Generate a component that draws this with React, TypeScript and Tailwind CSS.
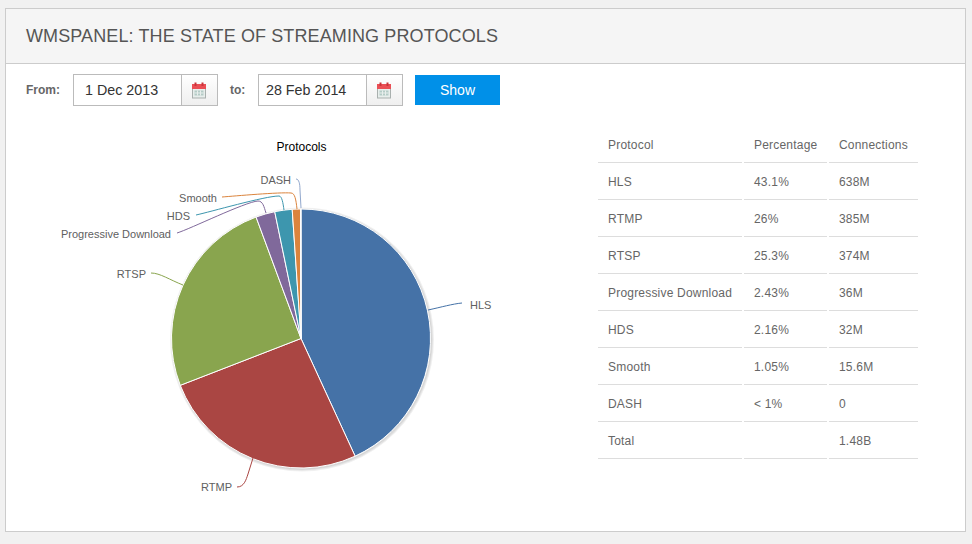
const rows = [
  ["HLS", "43.1%", "638M"],
  ["RTMP", "26%", "385M"],
  ["RTSP", "25.3%", "374M"],
  ["Progressive Download", "2.43%", "36M"],
  ["HDS", "2.16%", "32M"],
  ["Smooth", "1.05%", "15.6M"],
  ["DASH", "< 1%", "0"],
  ["Total", "", "1.48B"],
];

const cx = 301, cy = 338.5, r = 129.5;
const pt = (deg: number) => {
  const a = (deg * Math.PI) / 180;
  return [cx + r * Math.sin(a), cy - r * Math.cos(a)];
};
const slice = (from: number, to: number) => {
  const [x1, y1] = pt(from);
  const [x2, y2] = pt(to);
  return `M${cx} ${cy}L${x1} ${y1}A${r} ${r} 0 ${to - from > 180 ? 1 : 0} 1 ${x2} ${y2}Z`;
};

const slices = [
  { from: 0, to: 155.3, color: "#4572a7" },
  { from: 155.3, to: 248.8, color: "#aa4643" },
  { from: 248.8, to: 339.7, color: "#89a54e" },
  { from: 339.7, to: 348.3, color: "#80699b" },
  { from: 348.3, to: 356.1, color: "#3d96ae" },
  { from: 356.1, to: 359.8, color: "#db843d" },
  { from: 359.8, to: 360, color: "#92a8cd" },
];

const labels = [
  { text: "HLS", x: 470, y: 309, anchor: "start", color: "#4572a7", d: "M462 303C452 304 442 307 428 310" },
  { text: "RTMP", x: 232, y: 491, anchor: "end", color: "#aa4643", d: "M237 487C244 487 246 480 248 474L253 458" },
  { text: "RTSP", x: 146, y: 278, anchor: "end", color: "#89a54e", d: "M151 273C160 273 170 280 183 285" },
  { text: "Progressive Download", x: 171, y: 238, anchor: "end", color: "#80699b", d: "M177 233C190 229 245 202 258 201C263 201 264 207 266 213" },
  { text: "HDS", x: 190, y: 220, anchor: "end", color: "#3d96ae", d: "M196 215C210 212 265 196 279 196C282 196 283 203 284 210" },
  { text: "Smooth", x: 217, y: 202, anchor: "end", color: "#db843d", d: "M222 197C235 196 280 192 291 193C295 193 296 200 297 209" },
  { text: "DASH", x: 291, y: 184, anchor: "end", color: "#92a8cd", d: "M296 179C299 179 300 184 300 190L301 208" },
];

function CalendarIcon() {
  return (
    <svg width="16" height="17" viewBox="0 0 16 17">
      <rect x="1.5" y="5" width="13" height="11" fill="#e8eeec" stroke="#a9b0ae" />
      <rect x="1" y="2" width="14" height="5" fill="#ea4f55" />
      <rect x="3.5" y="0.5" width="2" height="3.5" fill="#c9343a" />
      <rect x="10.5" y="0.5" width="2" height="3.5" fill="#c9343a" />
      <rect x="3.5" y="8.5" width="9" height="5" fill="#b4cbc6" />
      <path d="M6.5 8.5v5M9.5 8.5v5M3.5 11h9" stroke="#e8eeec" strokeWidth="1" />
    </svg>
  );
}

function DateField({ value, indent }: { value: string; indent: string }) {
  return (
    <div className="flex h-8 w-[145px] border border-[#bbbbbb] bg-white">
      <div className={`flex w-[108px] items-center border-r border-[#bbbbbb] pt-px text-[14.3px] text-[#333333] ${indent}`}>{value}</div>
      <div className="flex flex-1 items-center justify-center bg-gradient-to-b from-white to-[#efefef] pr-[2px]">
        <CalendarIcon />
      </div>
    </div>
  );
}

function PieChart() {
  return (
    <svg width="590" height="400" viewBox="6 126 590 400" className="shrink-0">
      <text x="301.5" y="151" textAnchor="middle" fontSize="12" fill="#000000">Protocols</text>
      {[5, 3, 1].map((w) => (
        <circle key={w} cx={cx + 1} cy={cy + 1} r={r} fill="none" stroke="#000000" strokeOpacity={0.06} strokeWidth={w} />
      ))}
      {slices.map((s) => (
        <path key={s.color} d={slice(s.from, s.to)} fill={s.color} stroke="#ffffff" strokeWidth="1" strokeLinejoin="round" />
      ))}
      {labels.map((l) => (
        <g key={l.text}>
          <path d={l.d} fill="none" stroke={l.color} strokeWidth="1" />
          <text x={l.x} y={l.y} textAnchor={l.anchor as "start" | "end"} fontSize="11" fill="#606060">{l.text}</text>
        </g>
      ))}
    </svg>
  );
}

export default function App() {
  return (
    <div className="min-h-[544px] bg-[#f1f1f1] px-[5px] pt-2 font-['Liberation_Sans',Arial,sans-serif]">
      <div className="h-[524px] w-[961px] border border-[#cccccc] bg-white">
        <div className="flex h-[55px] items-center border-b border-[#cccccc] bg-[#f5f5f5] px-5">
          <h1 className="text-lg tracking-[0.11px] text-[#555555]">WMSPANEL: THE STATE OF STREAMING PROTOCOLS</h1>
        </div>
        <div className="flex h-[62px] items-start px-5 pt-[10px]">
          <span className="w-[47px] pt-2 text-xs font-bold text-[#666666]">From:</span>
          <DateField value="1 Dec 2013" indent="pl-[11px]" />
          <span className="w-[40px] pl-3 pt-2 text-xs font-bold text-[#666666]">to:</span>
          <DateField value="28 Feb 2014" indent="pl-[7px]" />
          <button className="ml-3 mt-px h-[30px] w-[85px] bg-[#0090e8] text-sm text-white">Show</button>
        </div>
        <div className="flex">
          <PieChart />
          <table className="h-fit w-[324px] border-separate border-spacing-x-[2px] border-spacing-y-[2px] text-left text-xs tracking-[0.2px] text-[#666666]">
            <thead>
              <tr>
                <th className="h-[35px] w-[144px] border-b border-[#dddddd] pb-px pl-[10px] font-normal">Protocol</th>
                <th className="h-[35px] w-[83px] border-b border-[#dddddd] pb-px pl-[10px] font-normal">Percentage</th>
                <th className="h-[35px] border-b border-[#dddddd] pb-px pl-[10px] font-normal">Connections</th>
              </tr>
            </thead>
            <tbody>
              {rows.map((row) => (
                <tr key={row[0]}>
                  {row.map((cell, i) => (
                    <td key={i} className="h-[35px] border-b border-[#dddddd] pb-px pl-[10px]">{cell}</td>
                  ))}
                </tr>
              ))}
            </tbody>
          </table>
        </div>
      </div>
    </div>
  );
}
